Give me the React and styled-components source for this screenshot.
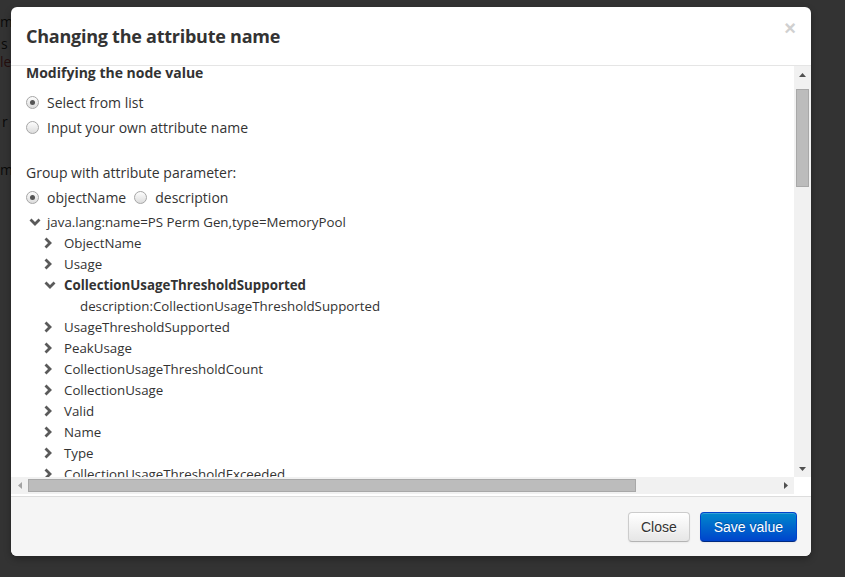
import React from 'react';
import styled, { createGlobalStyle } from 'styled-components';

const Global = createGlobalStyle`
  html, body { margin: 0; padding: 0; }
  body {
    width: 845px;
    height: 577px;
    overflow: hidden;
    background: #fff;
    font-family: "Open Sans", "Liberation Sans", sans-serif;
    color: #333;
  }
`;

const Page = styled.div`
  position: relative;
  width: 845px;
  height: 577px;
  overflow: hidden;
`;

const PageText = styled.div`
  display: flex;
  flex-direction: column;
  padding-top: 12px;
  font-size: 14px;
  line-height: 20px;
`;

const PageLine = styled.div`
  margin-top: ${p => p.$gap || 0}px;
  margin-left: ${p => p.$indent || 0}px;
  color: ${p => (p.$danger ? '#b94a48' : '#333')};
  white-space: nowrap;
`;

const Backdrop = styled.div`
  position: absolute;
  inset: 0;
  background: rgba(0, 0, 0, 0.8);
`;

const Modal = styled.div`
  position: absolute;
  left: 11px;
  top: 7px;
  width: 800px;
  height: 549px;
  background: #fff;
  border-radius: 6px;
  box-shadow: 0 3px 7px rgba(0, 0, 0, 0.3);
  display: flex;
  flex-direction: column;
  overflow: hidden;
`;

const Header = styled.div`
  height: 58px;
  border-bottom: 1px solid #e5e5e5;
  display: flex;
  align-items: center;
  justify-content: space-between;
  padding: 0 15px;
  flex-shrink: 0;
`;

const Title = styled.h3`
  margin: 0;
  font-size: 18px;
  font-weight: 700;
  color: #333;
  letter-spacing: -0.25px;
`;

const CloseX = styled.span`
  font-family: "Liberation Sans", Arial, sans-serif;
  font-size: 20px;
  font-weight: 700;
  color: #d0d0d0;
  margin-top: -16px;
  cursor: pointer;
`;

const ScrollFrame = styled.div`
  display: grid;
  grid-template-columns: 783px 17px;
  grid-template-rows: 411px 17px;
  flex-shrink: 0;
`;

const Content = styled.div`
  overflow: hidden;
  padding-left: 15px;
  font-size: 14px;
  line-height: 20px;
`;

const Heading = styled.div`
  font-weight: 700;
  margin-top: -3px;
  height: 19px;
`;

const Label = styled.div`
  margin-top: ${p => p.$gap || 0}px;
  height: 25px;
  display: flex;
  align-items: center;
`;

const RadioRow = styled.div`
  height: 25px;
  display: flex;
  align-items: center;
  gap: 8px;
`;

const RadioItem = styled.label`
  display: flex;
  align-items: center;
  gap: 8px;
`;

const Radio = styled.span`
  width: 11px;
  height: 11px;
  border-radius: 50%;
  border: 1px solid #a6a6a6;
  background: linear-gradient(#fdfdfd, #dcdcdc);
  display: inline-flex;
  align-items: center;
  justify-content: center;
  flex-shrink: 0;
  &::after {
    content: '';
    width: 5px;
    height: 5px;
    border-radius: 50%;
    background: ${p => (p.$checked ? '#555' : 'transparent')};
  }
`;

const Tree = styled.div`
  display: flex;
  flex-direction: column;
  margin-top: 1px;
  font-size: 13.3px;
`;

const Node = styled.div`
  height: 21px;
  display: flex;
  align-items: center;
  padding-left: ${p => p.$indent}px;
  font-weight: ${p => (p.$bold ? 700 : 400)};
  white-space: nowrap;
`;

const Toggle = styled.span`
  width: ${p => p.$width}px;
  display: inline-flex;
  align-items: center;
  flex-shrink: 0;
`;

const VTrack = styled.div`
  background: #f1f1f1;
  display: flex;
  flex-direction: column;
  align-items: center;
`;

const HTrack = styled.div`
  background: #f1f1f1;
  display: flex;
  align-items: center;
`;

const Corner = styled.div`
  background: #fff;
`;

const Arrow = styled.div`
  width: 17px;
  height: 17px;
  display: flex;
  align-items: center;
  justify-content: center;
  flex-shrink: 0;
`;

const Thumb = styled.div`
  background: #bcbcbc;
  border: 1px solid #a8a8a8;
  box-sizing: border-box;
  ${p => (p.$vertical ? 'width: 13px; height: 98px; margin-top: 6px;' : 'height: 13px; width: 608px;')}
`;

const Spacer = styled.div`
  flex: 1;
`;

const Footer = styled.div`
  margin-top: 2px;
  flex: 1;
  background: #f5f5f5;
  border-top: 1px solid #ddd;
  display: flex;
  align-items: center;
  justify-content: flex-end;
  gap: 10px;
  padding: 0 14px 0 0;
`;

const Button = styled.button`
  height: 30px;
  padding: 0 ${p => (p.$primary ? 13 : 12)}px;
  font-family: "Liberation Sans", Arial, sans-serif;
  font-size: 14px;
  border-radius: 4px;
  cursor: pointer;
  color: ${p => (p.$primary ? '#fff' : '#333')};
  border: 1px solid ${p => (p.$primary ? '#0044cc' : '#cccccc')};
  border-bottom-color: ${p => (p.$primary ? '#002a80' : '#b3b3b3')};
  background: ${p =>
    p.$primary ? 'linear-gradient(#0088cc, #0044cc)' : 'linear-gradient(#ffffff, #e6e6e6)'};
  box-shadow: inset 0 1px 0 rgba(255, 255, 255, 0.2), 0 1px 2px rgba(0, 0, 0, 0.05);
  text-shadow: ${p => (p.$primary ? '0 -1px 0 rgba(0,0,0,0.25)' : '0 1px 1px rgba(255,255,255,0.75)')};
`;

const Tri = ({ dir }) => {
  const pts = {
    up: '0,4 7,4 3.5,0',
    down: '0,0 7,0 3.5,4',
    left: '4,0 4,7 0,3.5',
    right: '0,0 0,7 4,3.5',
  }[dir];
  const vert = dir === 'up' || dir === 'down';
  return (
    <svg width={vert ? 7 : 4} height={vert ? 4 : 7}>
      <polygon points={pts} fill={dir === 'left' ? '#a3a3a3' : '#505050'} />
    </svg>
  );
};

const Chevron = ({ open }) =>
  open ? (
    <svg width="12" height="8" viewBox="0 0 12 8">
      <polyline points="1.5,1.5 6,6 10.5,1.5" fill="none" stroke="#5a5a5a" strokeWidth="2.8" />
    </svg>
  ) : (
    <svg width="9" height="12" viewBox="0 0 9 12">
      <polyline points="1.5,1.5 6,6 1.5,10.5" fill="none" stroke="#5a5a5a" strokeWidth="2.8" />
    </svg>
  );

const children = [
  { name: 'ObjectName' },
  { name: 'Usage' },
  { name: 'CollectionUsageThresholdSupported', open: true, leaf: 'description:CollectionUsageThresholdSupported' },
  { name: 'UsageThresholdSupported' },
  { name: 'PeakUsage' },
  { name: 'CollectionUsageThresholdCount' },
  { name: 'CollectionUsage' },
  { name: 'Valid' },
  { name: 'Name' },
  { name: 'Type' },
  { name: 'CollectionUsageThresholdExceeded' },
  { name: 'UsageThreshold' },
];

export default function App() {
  return (
    <Page>
      <Global />
      <PageText>
        <PageLine>m</PageLine>
        <PageLine $gap={2} $indent={1}>s</PageLine>
        <PageLine $gap={-2} $danger>le</PageLine>
        <PageLine $gap={40} $indent={2}>r</PageLine>
        <PageLine $gap={28}>m</PageLine>
      </PageText>
      <Backdrop />
      <Modal>
        <Header>
          <Title>Changing the attribute name</Title>
          <CloseX>×</CloseX>
        </Header>
        <ScrollFrame>
          <Content>
            <Heading>Modifying the node value</Heading>
            <Label $gap={8}>
              <RadioItem>
                <Radio $checked />
                Select from list
              </RadioItem>
            </Label>
            <Label>
              <RadioItem>
                <Radio />
                Input your own attribute name
              </RadioItem>
            </Label>
            <Label $gap={20}>Group with attribute parameter:</Label>
            <RadioRow>
              <RadioItem>
                <Radio $checked />
                objectName
              </RadioItem>
              <RadioItem>
                <Radio />
                description
              </RadioItem>
            </RadioRow>
            <Tree>
              <Node $indent={3}>
                <Toggle $width={18}>
                  <Chevron open />
                </Toggle>
                java.lang:name=PS Perm Gen,type=MemoryPool
              </Node>
              {children.map(c => (
                <React.Fragment key={c.name}>
                  <Node $indent={18} $bold={c.open}>
                    <Toggle $width={20}>
                      <Chevron open={c.open} />
                    </Toggle>
                    {c.name}
                  </Node>
                  {c.leaf && <Node $indent={54}>{c.leaf}</Node>}
                </React.Fragment>
              ))}
            </Tree>
          </Content>
          <VTrack>
            <Arrow>
              <Tri dir="up" />
            </Arrow>
            <Thumb $vertical />
            <Spacer />
            <Arrow>
              <Tri dir="down" />
            </Arrow>
          </VTrack>
          <HTrack>
            <Arrow>
              <Tri dir="left" />
            </Arrow>
            <Thumb />
            <Spacer />
            <Arrow>
              <Tri dir="right" />
            </Arrow>
          </HTrack>
          <Corner />
        </ScrollFrame>
        <Footer>
          <Button>Close</Button>
          <Button $primary>Save value</Button>
        </Footer>
      </Modal>
    </Page>
  );
}
